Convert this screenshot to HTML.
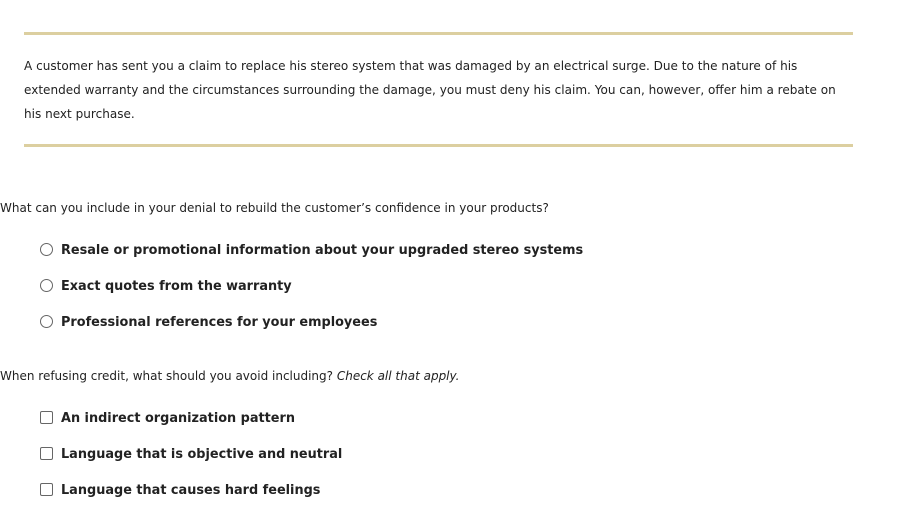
<!DOCTYPE html>
<html><head><style>
body{margin:0;width:909px;height:512px;background:#fff;font-family:"DejaVu Sans","Liberation Sans",sans-serif;color:#222;font-size:12px;position:relative;overflow:hidden}
.rule{position:absolute;left:24px;width:829px;height:3px;background:#dccfa0}
.t{position:absolute;white-space:nowrap}
.p{position:absolute;left:24px;top:54px;width:818px;line-height:24px;font-size:12.05px}
.o{position:absolute;left:40px;width:13px;height:13px;border:1px solid #666;box-sizing:border-box}
.r{border-radius:50%}
.c{border-radius:2px}
.l{position:absolute;left:61px;font-weight:bold;font-size:12.85px;white-space:nowrap;color:#222}
</style></head><body>
<div class="rule" style="top:32px"></div>
<div class="p">A customer has sent you a claim to replace his stereo system that was damaged by an electrical surge. Due to the nature of his extended warranty and the circumstances surrounding the damage, you must deny his claim. You can, however, offer him a rebate on his next purchase.</div>
<div class="rule" style="top:144px"></div>
<div class="t" style="left:0;top:201px">What can you include in your denial to rebuild the customer’s confidence in your products?</div>
<div class="o r" style="top:243px"></div><div class="l" style="top:243px">Resale or promotional information about your upgraded stereo systems</div>
<div class="o r" style="top:279px"></div><div class="l" style="top:279px">Exact quotes from the warranty</div>
<div class="o r" style="top:315px"></div><div class="l" style="top:315px">Professional references for your employees</div>
<div class="t" style="left:0;top:369px">When refusing credit, what should you avoid including? <i>Check all that apply.</i></div>
<div class="o c" style="top:411px"></div><div class="l" style="top:411px">An indirect organization pattern</div>
<div class="o c" style="top:447px"></div><div class="l" style="top:447px">Language that is objective and neutral</div>
<div class="o c" style="top:483px"></div><div class="l" style="top:483px">Language that causes hard feelings</div>
</body></html>
